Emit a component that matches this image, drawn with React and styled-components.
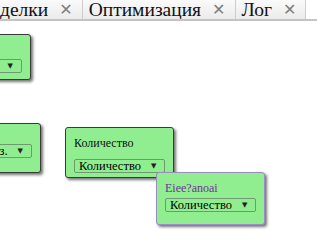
import React from "react";
import styled, { createGlobalStyle } from "styled-components";

const Global = createGlobalStyle`
  html, body { margin: 0; padding: 0; background: #fff; }
  body { width: 317px; height: 250px; overflow: hidden; font-family: "Liberation Serif", "Times New Roman", serif; }
`;

const Page = styled.div`
  display: flex;
  flex-direction: column;
  width: 317px;
  height: 250px;
  overflow: hidden;
`;

const TabBar = styled.div`
  display: flex;
  height: 19px;
  border-bottom: 2px solid #c4c4c4;
  background: #fff;
  overflow: hidden;
`;

const TabStrip = styled.div`
  display: flex;
  margin-left: -19px;
`;

const Tab = styled.div`
  display: flex;
  align-items: center;
  gap: 11px;
  height: 19px;
  padding: 0 9px 0 6px;
  background: linear-gradient(#fafafa, #ebebeb);
  border-right: 1px solid #cdcdcd;
  font-size: 19.5px;
  line-height: 19px;
  color: #111;
  white-space: nowrap;
`;

const Close = styled.span`
  font-family: "DejaVu Sans", sans-serif;
  font-size: 16px;
  font-weight: bold;
  color: #7d7d7d;
`;

const Canvas = styled.div`
  position: relative;
  flex: 1;
`;

const Node = styled.div`
  position: absolute;
  box-sizing: border-box;
  display: flex;
  flex-direction: column;
  align-items: flex-start;
  gap: ${(p) => p.$gap}px;
  padding: ${(p) => p.$pt}px 8px ${(p) => p.$pb}px 8px;
  background: #90ee90;
  border: 1px solid ${(p) => (p.$active ? "#9a8cc4" : "#3a3a3a")};
  border-radius: 3px;
  box-shadow: 2px 2px 3px rgba(0, 0, 0, 0.55);
`;

const Label = styled.div`
  font-size: 12px;
  line-height: 14px;
  color: ${(p) => (p.$purple ? "#7030a0" : "#111")};
  white-space: nowrap;
`;

const Select = styled.div`
  box-sizing: border-box;
  display: flex;
  align-items: center;
  gap: 10px;
  height: 14px;
  padding: 0 8px 0 4px;
  border: 1px solid #6f9a6f;
  border-radius: 2px;
  font-size: 12.5px;
  color: #000;
  white-space: nowrap;
`;

const Arrow = styled.span`
  font-family: "DejaVu Sans", sans-serif;
  font-size: 7px;
  color: #222;
`;

const tabs = ["Сделки", "Оптимизация", "Лог"];

const nodes = [
  { right: 286, top: 13, pt: 8, gap: 2, pb: 6, label: "Количество", value: "Количество, шт." },
  { right: 276, top: 102, pt: 4, gap: 2, pb: 14, label: "Количество", value: "Количество, оз." },
  { left: 65, top: 106, pt: 8, gap: 9, pb: 4, label: "Количество", value: "Количество" },
  { left: 156, top: 151, pt: 8, gap: 3, pb: 12, label: "Eiee?anoai", value: "Количество", active: true },
];

export default function App() {
  return (
    <Page>
      <Global />
      <TabBar>
        <TabStrip>
          {tabs.map((t) => (
            <Tab key={t}>
              {t}
              <Close>✕</Close>
            </Tab>
          ))}
        </TabStrip>
      </TabBar>
      <Canvas>
        {nodes.map((n, i) => (
          <Node
            key={i}
            $active={n.active}
            $pt={n.pt}
            $gap={n.gap}
            $pb={n.pb}
            style={{ left: n.left, right: n.right, top: n.top }}
          >
            <Label $purple={n.active}>{n.label}</Label>
            <Select>
              {n.value}
              <Arrow>▼</Arrow>
            </Select>
          </Node>
        ))}
      </Canvas>
    </Page>
  );
}
